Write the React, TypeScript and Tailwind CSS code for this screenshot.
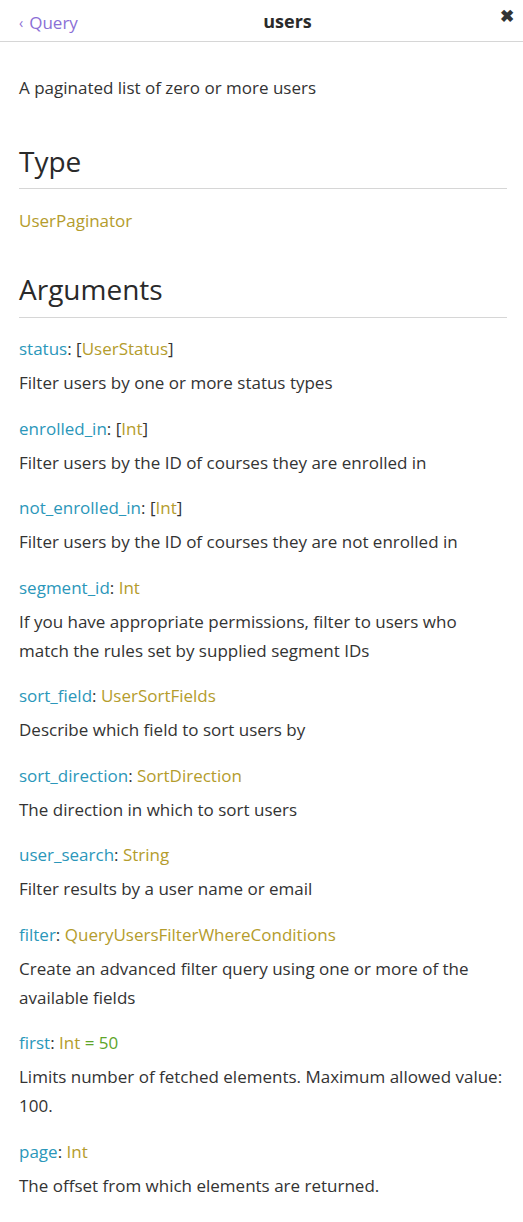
const args = [
  { name: 'status', type: 'UserStatus', list: true, desc: 'Filter users by one or more status types' },
  { name: 'enrolled_in', type: 'Int', list: true, desc: 'Filter users by the ID of courses they are enrolled in' },
  { name: 'not_enrolled_in', type: 'Int', list: true, desc: 'Filter users by the ID of courses they are not enrolled in' },
  {
    name: 'segment_id',
    type: 'Int',
    desc: 'If you have appropriate permissions, filter to users who match the rules set by supplied segment IDs',
  },
  { name: 'sort_field', type: 'UserSortFields', desc: 'Describe which field to sort users by' },
  { name: 'sort_direction', type: 'SortDirection', desc: 'The direction in which to sort users' },
  { name: 'user_search', type: 'String', desc: 'Filter results by a user name or email' },
  {
    name: 'filter',
    type: 'QueryUsersFilterWhereConditions',
    desc: 'Create an advanced filter query using one or more of the available fields',
  },
  { name: 'first', type: 'Int', def: '50', desc: 'Limits number of fetched elements. Maximum allowed value: 100.' },
  { name: 'page', type: 'Int', desc: 'The offset from which elements are returned.' },
]

export default function App() {
  return (
    <div className="min-h-[1222px] w-[523px] bg-white text-[#333] text-[17px] font-['Open_Sans',sans-serif]">
      {/* Header */}
      <header className="relative flex h-[42px] items-center justify-center border-b border-[#d6d6d6] pl-[52px]">
        <a className="absolute left-[19px] top-[9px] flex items-center gap-[6px] text-[17px] leading-[28px] text-[#8b6fd6]">
          <span className="text-[14px]">&lsaquo;</span>
          Query
        </a>
        <h1 className="text-[18px] font-bold leading-[28px] text-[#2a2a2a]">users</h1>
        <button className="absolute right-[9px] top-[4px] text-[17px] font-bold leading-[24px] text-[#333]">✖</button>
      </header>

      <main className="pl-[19px] pr-[16px]">
        <p className="mt-[31px] leading-[29px]">A paginated list of zero or more users</p>

        {/* Type */}
        <h2 className="mt-[42px] border-b border-[#d6d6d6] pb-[10px] text-[28px] font-normal leading-[34px] text-[#2a2a2a]">
          Type
        </h2>
        <div className="mt-[17px] leading-[29px] text-[#b49c2c]">UserPaginator</div>

        {/* Arguments */}
        <h2 className="mt-[37px] border-b border-[#d6d6d6] pb-[11px] text-[28px] font-normal leading-[34px] text-[#2a2a2a]">
          Arguments
        </h2>
        <div className="mt-[16px] pr-[4px]">
          {args.map((a) => (
            <div key={a.name} className="mb-[16.5px]">
              <div className="leading-[29px]">
                <span className="text-[#2b97ba]">{a.name}</span>
                <span>: </span>
                {a.list && <span>[</span>}
                <span className="text-[#b49c2c]">{a.type}</span>
                {a.list && <span>]</span>}
                {a.def && <span className="text-[#5ea52a]"> = {a.def}</span>}
              </div>
              <p className="mt-[5px] leading-[29px]">{a.desc}</p>
            </div>
          ))}
        </div>
      </main>
    </div>
  )
}
